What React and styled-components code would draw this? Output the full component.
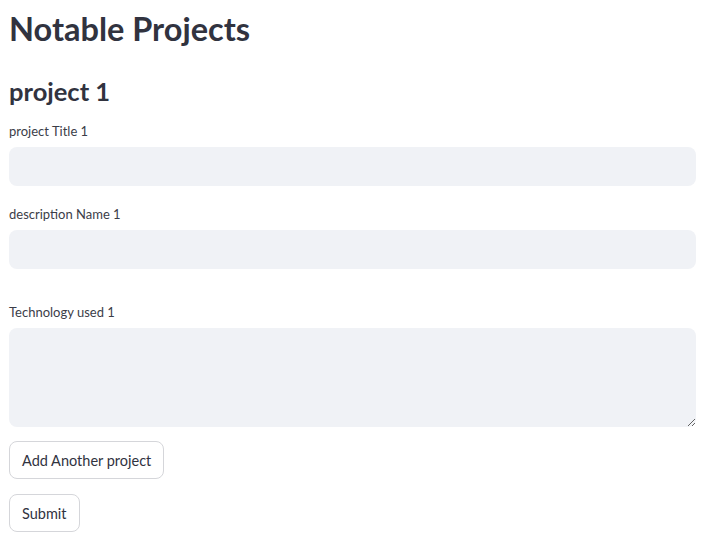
import React from 'react';
import styled, { createGlobalStyle } from 'styled-components';

const GlobalStyle = createGlobalStyle`
  body {
    margin: 0;
    background: #ffffff;
    font-family: Lato, "Noto Sans", sans-serif;
    color: #31333f;
  }
`;

const Page = styled.main`
  padding: 7px 24px 0 9px;
  display: flex;
  flex-direction: column;
`;

const Title = styled.h1`
  margin: 0;
  font-size: 32.5px;
  font-weight: 700;
  line-height: 44px;
  color: #31333f;
`;

const SubTitle = styled.h2`
  margin: 23px 0 0;
  font-size: 25.5px;
  font-weight: 700;
  line-height: 34px;
  color: #31333f;
`;

const Field = styled.div`
  display: flex;
  flex-direction: column;
  margin-top: ${(p) => p.$gap}px;
`;

const Label = styled.label`
  font-size: 13px;
  line-height: 18px;
  color: #3b3d48;
  margin-bottom: 7px;
`;

const Input = styled.input`
  box-sizing: border-box;
  height: 39px;
  width: 100%;
  border: none;
  border-radius: 8px;
  background: #f0f2f6;
  padding: 0 12px;
  font: inherit;
  outline: none;
`;

const TextArea = styled.textarea`
  box-sizing: border-box;
  height: 99px;
  width: 100%;
  border: none;
  border-radius: 8px;
  background: #f0f2f6;
  padding: 12px;
  font: inherit;
  outline: none;
  resize: vertical;
`;

const Button = styled.button`
  box-sizing: border-box;
  align-self: flex-start;
  margin-top: ${(p) => p.$gap}px;
  height: 38px;
  padding: 0 12px;
  background: #ffffff;
  border: 1px solid #d5d6da;
  border-radius: 8px;
  font-family: Lato, "Noto Sans", sans-serif;
  font-size: 14.5px;
  color: #31333f;
`;

export default function App() {
  return (
    <>
      <GlobalStyle />
      <Page>
        <Title>Notable Projects</Title>
        <SubTitle>project 1</SubTitle>
        <Field $gap={14}>
          <Label>project Title 1</Label>
          <Input />
        </Field>
        <Field $gap={19}>
          <Label>description Name 1</Label>
          <Input />
        </Field>
        <Field $gap={34}>
          <Label>Technology used 1</Label>
          <TextArea />
        </Field>
        <Button $gap={14}>Add Another project</Button>
        <Button $gap={15}>Submit</Button>
      </Page>
    </>
  );
}
